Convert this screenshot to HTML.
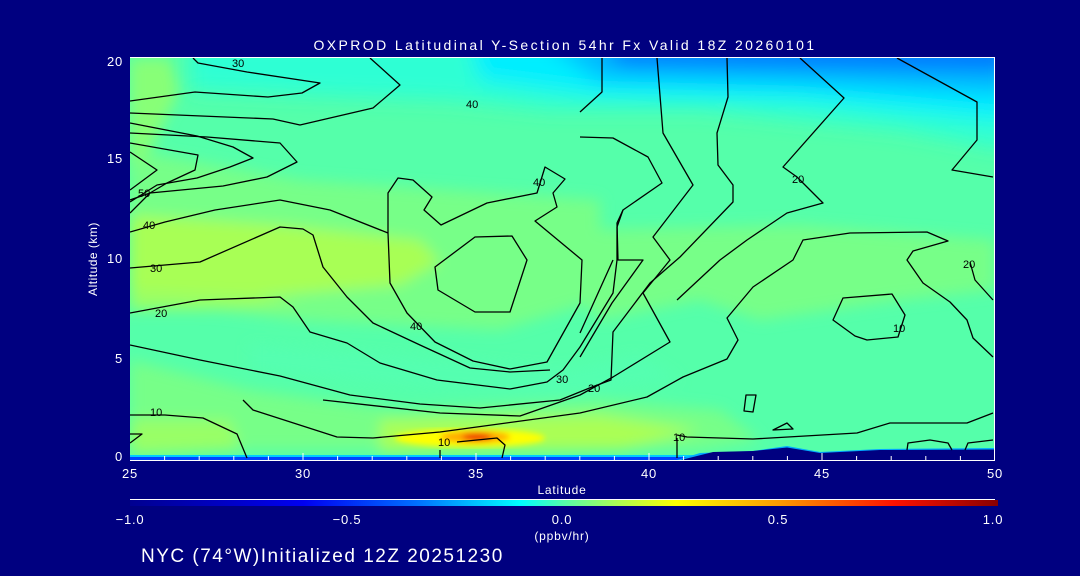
<!DOCTYPE html>
<html><head><meta charset="utf-8"><style>
html,body{margin:0;padding:0;background:#000080;width:1080px;height:576px;overflow:hidden}
svg{display:block}
text{font-family:"Liberation Sans",sans-serif;fill:#fff}
</style></head><body>
<svg width="1080" height="576" viewBox="0 0 1080 576" xmlns="http://www.w3.org/2000/svg">
<defs>
<clipPath id="pc"><rect x="130" y="58" width="865" height="402"/></clipPath>
<filter id="bl" x="-20%" y="-20%" width="140%" height="140%"><feGaussianBlur stdDeviation="7"/></filter>
<filter id="bl3" x="-20%" y="-50%" width="140%" height="200%"><feGaussianBlur stdDeviation="10"/></filter>
<filter id="bl2"><feGaussianBlur stdDeviation="3"/></filter>
<linearGradient id="top" x1="0" y1="0" x2="0" y2="1">
<stop offset="0" stop-color="#0070ff"/><stop offset="0.2" stop-color="#00aaff"/><stop offset="0.4" stop-color="#00e8ff"/><stop offset="0.6" stop-color="#22ffe0"/><stop offset="1" stop-color="#55ffaa" stop-opacity="0"/>
</linearGradient>
<linearGradient id="cb" x1="0" y1="0" x2="1" y2="0">
<stop offset="0" stop-color="#000090"/><stop offset="0.2" stop-color="#0000f0"/><stop offset="0.33" stop-color="#0070ff"/><stop offset="0.45" stop-color="#00ffff"/><stop offset="0.5" stop-color="#55ffaa"/><stop offset="0.56" stop-color="#aaff55"/><stop offset="0.63" stop-color="#ffff00"/><stop offset="0.75" stop-color="#ff9900"/><stop offset="0.88" stop-color="#ff1100"/><stop offset="1" stop-color="#880000"/>
</linearGradient>
</defs>
<text x="565" y="50" font-size="14" text-anchor="middle" letter-spacing="2.4">OXPROD Latitudinal Y-Section 54hr  Fx Valid 18Z 20260101</text>
<g clip-path="url(#pc)">
<rect x="130" y="58" width="865" height="402" fill="#55ffaa"/>
<g filter="url(#bl)">
<polygon points="130,150 300,180 600,200 600,300 500,330 300,320 130,300" fill="#77ff88"/>
<polygon points="580,230 800,225 995,240 995,290 900,300 760,320 700,300 600,320 580,300" fill="#77ff88"/>
<polygon points="130,58 170,58 180,90 150,150 130,170" fill="#88ff77"/>
<polygon points="130,360 250,390 400,410 600,400 720,410 760,440 700,450 130,450" fill="#77ff88"/>
<polygon points="130,215 280,225 420,240 440,262 400,285 280,295 130,300" fill="#a8ff55"/>
<polygon points="130,290 250,295 300,305 200,310 130,310" fill="#99ff66"/>
<polygon points="250,345 450,360 560,370 640,355 680,380 560,395 400,385 250,370" fill="#55ffb0"/>
<polygon points="380,420 600,415 700,430 620,450 380,452" fill="#aaff55"/>
<polygon points="130,420 230,420 240,450 130,455" fill="#99ff66"/>
</g>
<g filter="url(#bl3)">
<polygon points="190,40 1010,40 1010,150 900,130 700,110 550,110 450,100 300,95 190,90" fill="#2dffd4"/>
<polygon points="470,40 1010,40 1010,120 800,100 600,95 480,80" fill="#00eeff"/>
<polygon points="540,40 1010,40 1010,95 800,85 600,80" fill="#00bbff"/>
<polygon points="600,40 1010,40 1010,72 800,68 620,65" fill="#0077ff"/>
</g>
<g filter="url(#bl2)">
<ellipse cx="470" cy="438" rx="75" ry="9" fill="#ffff00"/>
<ellipse cx="475" cy="437" rx="35" ry="6" fill="#ffaa00"/>
<ellipse cx="477" cy="437" rx="15" ry="3.5" fill="#ee2200"/>
</g>
<rect x="130" y="455" width="865" height="2" fill="#00ccff"/>
<rect x="130" y="457" width="865" height="3" fill="#0044ff"/>
<polygon points="677,460 700,453 753,451 787,446 820,452 880,449 995,448 995,460" fill="#00aaff"/>
<polygon points="677,461 713,452 753,451 787,447.5 820,453 880,450 995,449.5 995,461" fill="#000080"/>
<g fill="none" stroke="#000" stroke-width="1.3" stroke-linejoin="round">
<polyline points="130,101 195,92 268,97 302,93 320,83 247,72 198,63 193,58"/>
<polyline points="130,113 273,119 300,125 373,108 400,85 370,58"/>
<polyline points="130,123 197,136 233,147 253,158 230,167 197,178 157,185 130,202"/>
<polyline points="130,133 207,137 280,143 297,162 267,177 223,186 150,193 130,200"/>
<polyline points="130,143 198,155 195,170 167,183 150,193 130,213"/>
<polyline points="130,152 157,170 130,190"/>
<polyline points="130,232 165,222 215,210 280,200 330,210 388,233"/>
<polygon points="435,267 475,237 512,236 527,260 510,312 475,312 438,290"/>
<polyline points="388,233 388,193 398,178 413,180 432,197 424,210 441,225 487,203 537,193 545,167 565,179 553,193 557,207 535,221 582,260 580,303 547,362 510,369 473,361 435,342 407,313 390,283 388,233"/>
<polyline points="130,268 200,262 280,227 303,229 313,235 323,267 347,297 373,323 420,345 470,368 510,372 550,370"/>
<polyline points="130,313 200,300 280,297 293,307 310,332 347,343 380,363 437,380 510,389 547,382 563,370 580,347 613,293 617,260 617,227 623,210 662,183 648,157 613,138 580,137"/>
<polyline points="130,345 200,360 280,376 350,395 420,404 480,408 560,400 592,387 611,380 613,332 650,283 680,257 733,202 733,185 718,165 717,133 728,97 727,58"/>
<polyline points="130,415 165,415 203,418 237,434 247,458"/>
<polyline points="243,400 253,410 337,437 373,438 440,432 580,413 647,397 683,377 727,359 738,340 727,318 753,287 793,260 803,240 850,233 927,232 948,241 913,251 907,260 923,283 950,302 967,320 973,338 993,357"/>
<polyline points="323,400 440,413 520,416 580,395 613,377 670,342 643,293 670,260 653,237 693,185 663,133 657,58"/>
<polyline points="580,357 612,303 643,260 618,260 617,223 623,210"/>
<polyline points="580,333 613,260"/>
<polyline points="602,58 602,92 580,112"/>
<polyline points="800,58 844,98 783,167 797,177 823,203 787,213 747,240 720,260 677,300"/>
<polyline points="897,58 977,102 977,140 952,170 993,177"/>
<polyline points="970,262 975,280 993,300"/>
<polygon points="843,298 892,294 905,315 898,337 867,340 855,336 833,320"/>
<polygon points="746,395 756,395 753,412 744,411"/>
<polygon points="773,430 787,423 793,429"/>
<polyline points="677,435 687,437 753,439 857,433 890,423 967,423 993,413"/>
<polyline points="907,450 908,443 930,440 948,443 952,450"/>
<polyline points="965,450 968,443 993,440"/>
<polyline points="130,443 142,434 130,434"/>
<polyline points="457,442 497,438 505,445 502,458"/>
<polyline points="440,450 440,458"/>
<polyline points="677,438 677,458"/>
</g>
<g font-size="11">
<text x="232" y="67" style="fill:#000">30</text>
<text x="138" y="197" style="fill:#000">50</text>
<text x="143" y="229" style="fill:#000">40</text>
<text x="150" y="272" style="fill:#000">30</text>
<text x="155" y="317" style="fill:#000">20</text>
<text x="150" y="416" style="fill:#000">10</text>
<text x="410" y="330" style="fill:#000">40</text>
<text x="556" y="383" style="fill:#000">30</text>
<text x="588" y="392" style="fill:#000">20</text>
<text x="438" y="446" style="fill:#000">10</text>
<text x="792" y="183" style="fill:#000">20</text>
<text x="963" y="268" style="fill:#000">20</text>
<text x="893" y="332" style="fill:#000">10</text>
<text x="673" y="441" style="fill:#000">10</text>
<text x="466" y="108" style="fill:#000">40</text>
<text x="533" y="186" style="fill:#000">40</text>
</g>
</g>
<g stroke="#fff" stroke-width="1" fill="none">
<line x1="130" y1="57.5" x2="995" y2="57.5"/>
<line x1="994.5" y1="58" x2="994.5" y2="460"/>
<line x1="130" y1="460.5" x2="995" y2="460.5"/>
<path d="M164.6 460v-4M199.2 460v-4M233.8 460v-4M268.4 460v-4M303 460v-7M337.6 460v-4M372.2 460v-4M406.8 460v-4M441.4 460v-4M476 460v-7M510.6 460v-4M545.2 460v-4M579.8 460v-4M614.4 460v-4M649 460v-7M683.6 460v-4M718.2 460v-4M752.8 460v-4M787.4 460v-4M822 460v-7M856.6 460v-4M891.2 460v-4M925.8 460v-4M960.4 460v-4"/>
<line x1="130" y1="499.5" x2="995" y2="499.5"/>
</g>
<rect x="130" y="500" width="868" height="6" fill="url(#cb)"/>
<g font-size="13" letter-spacing="0.8">
<text x="123" y="66" text-anchor="end">20</text>
<text x="123" y="163" text-anchor="end">15</text>
<text x="123" y="263" text-anchor="end">10</text>
<text x="123" y="363" text-anchor="end">5</text>
<text x="123" y="461" text-anchor="end">0</text>
<text x="130" y="478" text-anchor="middle">25</text>
<text x="303" y="478" text-anchor="middle">30</text>
<text x="476" y="478" text-anchor="middle">35</text>
<text x="649" y="478" text-anchor="middle">40</text>
<text x="822" y="478" text-anchor="middle">45</text>
<text x="995" y="478" text-anchor="middle">50</text>
<text x="130" y="524" text-anchor="middle">−1.0</text>
<text x="347" y="524" text-anchor="middle">−0.5</text>
<text x="562" y="524" text-anchor="middle">0.0</text>
<text x="778" y="524" text-anchor="middle">0.5</text>
<text x="993" y="524" text-anchor="middle">1.0</text>
</g>
<text x="562" y="494" font-size="12" text-anchor="middle" letter-spacing="0.8">Latitude</text>
<text x="562" y="540" font-size="12" text-anchor="middle" letter-spacing="0.8">(ppbv/hr)</text>
<text x="97" y="259" font-size="12" text-anchor="middle" letter-spacing="0.5" transform="rotate(-90 97 259)">Altitude (km)</text>
<text x="141" y="562" font-size="19" letter-spacing="1.5">NYC (74°W)Initialized 12Z 20251230</text>
</svg>
</body></html>
